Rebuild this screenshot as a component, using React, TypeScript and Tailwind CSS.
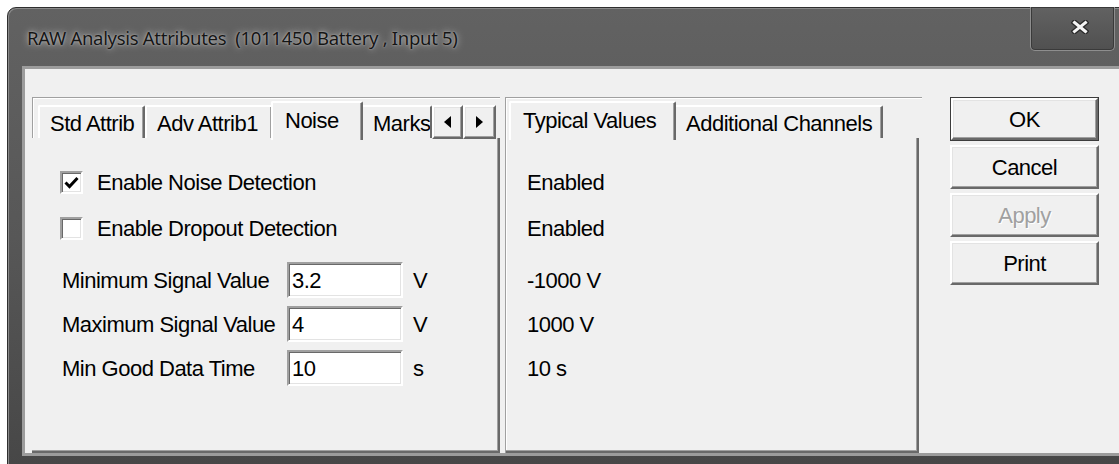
import React from 'react';

const ui = "font-['Liberation_Sans',Arial,sans-serif] text-[22px] tracking-[-0.5px] text-black";

// classic 3D raised edge used by buttons and the tab scroller
const raised =
  'border-2 border-t-white border-l-white border-b-[#696969] border-r-[#696969] shadow-[inset_-1px_-1px_0_#a0a0a0,inset_1px_1px_0_#e3e3e3] bg-[#f0f0f0]';

// sunken edge for edit boxes and checkboxes
const sunken =
  'border-2 border-t-[#a0a0a0] border-l-[#a0a0a0] border-b-white border-r-white shadow-[inset_1px_1px_0_#696969,inset_-1px_-1px_0_#e3e3e3] bg-white';

function Tab({ label, selected, width, clip }: { label: string; selected?: boolean; width: number; clip?: boolean }) {
  return (
    <div
      style={{ width }}
      className={
        selected
          ? 'relative z-10 -mx-[2px] flex h-[39px] items-start overflow-hidden rounded-t-[2px] border-l-2 border-t-2 border-r-2 border-l-white border-t-white border-r-[#696969] bg-[#f0f0f0] pl-[12px] pt-[6px] shadow-[inset_-1px_0_0_#a0a0a0]'
          : `mt-[4px] flex h-[33px] items-start overflow-hidden rounded-t-[2px] border-l-2 border-t-2 border-r-2 border-l-white border-t-white border-r-[#696969] bg-[#f0f0f0] pl-[10px] pt-[5px] shadow-[inset_-1px_0_0_#a0a0a0] ${clip ? 'border-r-0 shadow-none' : ''}`
      }
    >
      <span className="whitespace-nowrap leading-[24px]">{label}</span>
    </div>
  );
}

function Check({ checked }: { checked?: boolean }) {
  return (
    <div className={`flex h-[23px] w-[23px] items-center justify-center ${sunken}`}>
      {checked && (
        <svg width="15" height="13" viewBox="0 0 15 13">
          <path d="M1.5 6.5 L5.5 10.5 L13.5 2" fill="none" stroke="#000" strokeWidth="3" />
        </svg>
      )}
    </div>
  );
}

function Field({ label, value, unit }: { label: string; value: string; unit: string }) {
  return (
    <div className="flex h-[36px] items-center">
      <span className="w-[227px] pl-[2px]">{label}</span>
      <div className={`flex h-[36px] w-[116px] items-center pl-[3px] ${sunken}`}>{value}</div>
      <span className="ml-[10px]">{unit}</span>
    </div>
  );
}

function Button({ label, disabled, primary }: { label: string; disabled?: boolean; primary?: boolean }) {
  return (
    <div className={`h-[44px] w-[149px] ${primary ? 'border border-[#3c3c3c]' : ''}`}>
      <div className={`flex h-full w-full items-center justify-center ${raised}`}>
        <span className={disabled ? 'text-[#a0a0a0] [text-shadow:1px_1px_0_#fff]' : ''}>{label}</span>
      </div>
    </div>
  );
}

export default function App() {
  const typical = ['Enabled', 'Enabled', '-1000 V', '1000 V', '10 s'];

  return (
    <div className="h-[464px] w-[1119px] overflow-hidden bg-white pl-[7px] pt-[7px]">
      <div className="flex w-[1130px] flex-col rounded-tl-[9px] border border-[#2f2f2f] bg-gradient-to-b from-[#626262] via-[#575757] to-[#474747] pb-[10px] shadow-[inset_1px_1px_0_#8a8a8a]">
        {/* title bar */}
        <div className="flex h-[58px] items-start">
          <div className="whitespace-pre pl-[19px] pt-[18px] font-['Noto_Sans',sans-serif] text-[18.5px] leading-[24px] tracking-[-0.3px] text-[#151515] [text-shadow:0_0_7px_rgba(220,220,220,0.9),0_0_2px_rgba(200,200,200,0.8)]">
            RAW Analysis Attributes  (1011450 Battery , Input 5)
          </div>
          <div className="ml-auto mr-[21px] -mt-px flex h-[44px] w-[85px] items-center justify-center rounded-b-[5px] border border-t-0 border-[#8e8e8e] bg-gradient-to-b from-[#626262] to-[#505050] shadow-[inset_0_0_0_1px_#3a3a3a]">
            <svg width="18" height="14" viewBox="0 0 18 14" className="ml-[14px] mt-[-4px]">
              <path d="M3.5 2.5 L14.5 11.5 M14.5 2.5 L3.5 11.5" stroke="#2a2a2a" strokeWidth="5.5" strokeLinecap="square" />
              <path d="M3.5 2.5 L14.5 11.5 M14.5 2.5 L3.5 11.5" stroke="#f4f4f4" strokeWidth="3" strokeLinecap="square" />
            </svg>
          </div>
        </div>

        {/* client area */}
        <div className={`ml-[14px] flex h-[390px] border-y-[3px] border-l-[3px] border-[#9c9c9c] bg-[#f0f0f0] pl-[7px] pt-[28px] ${ui}`}>
          {/* left property tabs */}
          <div className="flex w-[468px] flex-col">
            <div className="flex h-[41px] border-l border-t border-[#a0a0a0] pl-[5px] pt-[3px] shadow-[inset_1px_1px_0_#fff]">
              <Tab label="Std Attrib" width={107} />
              <Tab label="Adv Attrib1" width={128} />
              <Tab label="Noise" selected width={92} />
              <Tab label="Marks" width={71} clip />
              <div className="mt-[4px] flex">
                <div className={`flex h-[34px] w-[31px] items-center justify-center ${raised}`}>
                  <svg width="7" height="12" viewBox="0 0 7 12"><path d="M7 0 L0 6 L7 12 Z" fill="#000" /></svg>
                </div>
                <div className={`flex h-[34px] w-[33px] items-center justify-center ${raised}`}>
                  <svg width="7" height="12" viewBox="0 0 7 12"><path d="M0 0 L7 6 L0 12 Z" fill="#000" /></svg>
                </div>
              </div>
            </div>
            <div className="flex flex-1 flex-col border-r-2 border-b-2 border-[#696969] pl-[28px] pt-[33px] shadow-[inset_-1px_-1px_0_#a0a0a0]">
              <div className="flex h-[23px] items-center">
                <Check checked />
                <span className="ml-[14px]">Enable Noise Detection</span>
              </div>
              <div className="mt-[23px] flex h-[23px] items-center">
                <Check />
                <span className="ml-[14px]">Enable Dropout Detection</span>
              </div>
              <div className="mt-[22px] flex flex-col gap-[8px]">
                <Field label="Minimum Signal Value" value="3.2" unit="V" />
                <Field label="Maximum Signal Value" value="4" unit="V" />
                <Field label="Min Good Data Time" value="10" unit="s" />
              </div>
            </div>
          </div>

          {/* typical values tabs */}
          <div className="ml-[5px] flex w-[417px] flex-col border-l border-t border-[#a0a0a0] shadow-[inset_1px_1px_0_#fff]">
            <div className="flex h-[40px] pl-[5px] pt-[3px]">
              <Tab label="Typical Values" selected width={167} />
              <Tab label="Additional Channels" width={209} />
            </div>
            <div className="mr-[3px] flex flex-1 flex-col border-r-2 border-b-2 border-[#696969] pl-[21px] pt-[33px] shadow-[inset_-1px_-1px_0_#a0a0a0]">
              {typical.map((t, i) => (
                <div key={i} className={`flex items-center ${i < 2 ? 'h-[23px]' : 'h-[36px]'} ${i === 1 ? 'mt-[23px]' : ''} ${i === 2 ? 'mt-[22px]' : ''} ${i > 2 ? 'mt-[8px]' : ''}`}>
                  {t}
                </div>
              ))}
            </div>
          </div>

          {/* dialog buttons */}
          <div className="ml-[28px] flex flex-col gap-[4px]">
            <Button label="OK" primary />
            <Button label="Cancel" />
            <Button label="Apply" disabled />
            <Button label="Print" />
          </div>
        </div>
      </div>
    </div>
  );
}
